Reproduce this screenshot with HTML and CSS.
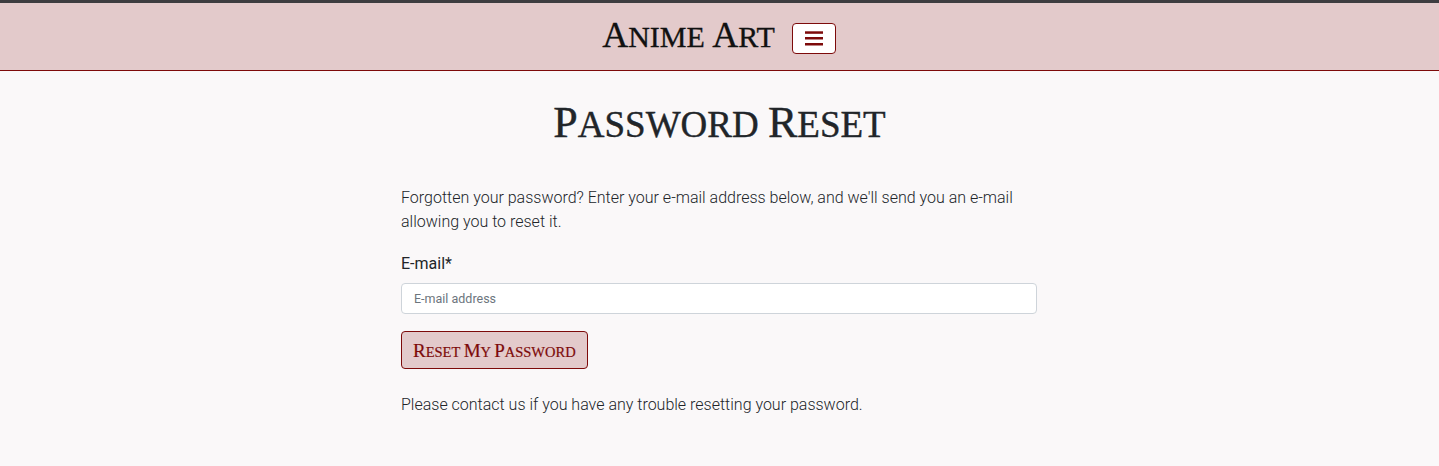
FILE: index.html
```html
<!DOCTYPE html>
<html lang="en">
<head>
<meta charset="utf-8">
<title>Password Reset - Anime Art</title>
<link rel="stylesheet" href="styles.css">
</head>
<body>
<header class="site-header">
  <div class="brand-row">
    <a class="brand" href="#"><span class="cap">A</span>nime <span class="cap">A</span>rt</a>
    <button class="nav-toggle" type="button" aria-label="Toggle navigation">
      <svg width="18" height="16" viewBox="0 0 18 16" aria-hidden="true">
        <rect x="0" y="1.3" width="18" height="2.5" fill="#7d0a0a"/>
        <rect x="0" y="7" width="18" height="2.5" fill="#7d0a0a"/>
        <rect x="0" y="13" width="18" height="2.5" fill="#7d0a0a"/>
      </svg>
    </button>
  </div>
</header>
<main class="page">
  <h1 class="page-title"><span class="cap">P</span>assword <span class="cap">R</span>eset</h1>
  <section class="reset-col">
    <p class="intro">Forgotten your password? Enter your e-mail address below, and we'll send you an e-mail allowing you to reset it.</p>
    <form class="reset-form">
      <label class="field-label" for="email">E-mail*</label>
      <input class="field-input" id="email" type="email" placeholder="E-mail address">
      <button class="btn-reset" type="submit"><span class="cap">R</span>eset <span class="cap">M</span>y <span class="cap">P</span>assword</button>
    </form>
    <p class="note">Please contact us if you have any trouble resetting your password.</p>
  </section>
</main>
</body>
</html>
```
FILE: styles.css
```css
* { box-sizing: border-box; }

html, body {
  margin: 0;
  padding: 0;
}

body {
  background: #faf8f9;
  color: #212529;
  font-family: Roboto, "Liberation Sans", sans-serif;
  font-weight: 300;
  font-size: 16px;
  line-height: 24px;
  border-top: 3px solid #3d3d40;
}

.site-header {
  background: #e3cacb;
  border-bottom: 1px solid #7d0a0a;
  height: 68px;
  display: flex;
  align-items: center;
  justify-content: center;
}

.brand-row {
  display: flex;
  align-items: center;
  gap: 17px;
  margin-left: -1px;
  margin-top: 3px;
}

.brand {
  font-family: "Liberation Serif", serif;
  text-transform: uppercase;
  font-size: 30px;
  color: #111;
  text-decoration: none;
  line-height: 1;
  margin-top: -6px;
  -webkit-text-stroke: 0.3px #111;
}

.brand .cap {
  font-size: 36px;
}

.nav-toggle {
  width: 44px;
  height: 31px;
  background: #fff;
  border: 1px solid #7d0a0a;
  border-radius: 4px;
  display: flex;
  align-items: center;
  justify-content: center;
  padding: 0;
  cursor: pointer;
}

.page {
  padding-top: 28px;
}

.page-title {
  margin: 0;
  text-align: center;
  font-family: "Liberation Serif", serif;
  text-transform: uppercase;
  font-weight: 400;
  font-size: 37px;
  line-height: 48px;
  color: #212529;
  -webkit-text-stroke: 0.4px #212529;
}

.page-title .cap {
  font-size: 44px;
}

.reset-col {
  width: 636px;
  margin: 37px 0 0 calc(50% - 318.5px);
}

.intro {
  margin: 0 0 18px;
}

.reset-form {
  display: flex;
  flex-direction: column;
  align-items: flex-start;
}

.field-label {
  font-weight: 400;
  margin-bottom: 8px;
}

.field-input {
  width: 100%;
  height: 31px;
  border: 1px solid #ced4da;
  border-radius: 4px;
  background: #fff;
  padding: 0 12px;
  font-family: Roboto, "Liberation Sans", sans-serif;
  font-size: 12.5px;
  color: #495057;
  margin-bottom: 17px;
  margin-top: -1px;
}

.field-input::placeholder {
  color: #6c757d;
}

.btn-reset {
  height: 38px;
  padding: 0 11px;
  background: #e3cacb;
  border: 1px solid #7d0a0a;
  border-radius: 4px;
  color: #7d0a0a;
  font-family: "Liberation Serif", serif;
  text-transform: uppercase;
  font-size: 14.5px;
  line-height: 1;
  cursor: pointer;
  -webkit-text-stroke: 0.2px #7d0a0a;
}

.btn-reset .cap {
  font-size: 19px;
}

.note {
  margin: 24px 0 0;
}
```
